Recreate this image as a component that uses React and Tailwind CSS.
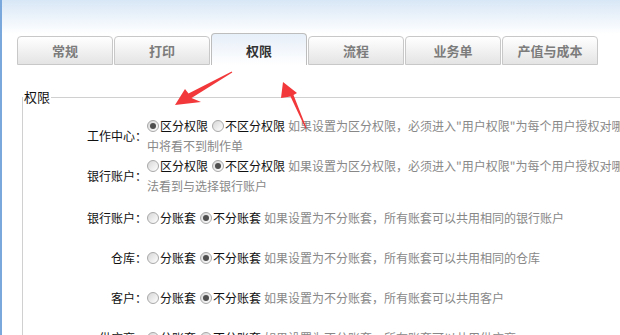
import React from "react";

const tabs = ["常规", "打印", "权限", "流程", "业务单", "产值与成本"];

function Radio({ checked, children }) {
  return (
    <span className="inline-flex items-center">
      <span className="relative mr-px inline-flex h-[12px] w-[12px] shrink-0 items-center justify-center rounded-full border border-[#a8a8a8] bg-gradient-to-br from-[#d6d6d6] to-white">
        {checked && <span className="h-[6px] w-[6px] rounded-full bg-[#4f4f4f]" />}
      </span>
      <span className="text-[#111]">{children}</span>
    </span>
  );
}

function Label({ children }) {
  return (
    <div className="w-[124px] shrink-0 text-right text-[12px] text-[#111]">{children}</div>
  );
}

// two options on one row, then the grey hint
function Options({ a, b, pick, hint }) {
  return (
    <div className="flex items-center whitespace-nowrap">
      <Radio checked={pick === 0}>{a}</Radio>
      <span className="ml-[4px]" />
      <Radio checked={pick === 1}>{b}</Radio>
      <span className="ml-[3px] text-[#888]">{hint}</span>
    </div>
  );
}

function TallRow({ label, pick, hint, rest }) {
  return (
    <div className="flex h-[40px] items-center">
      <Label>{label}</Label>
      <div className="text-[12px] leading-[20px]">
        <Options a="区分权限" b="不区分权限" pick={pick} hint={hint} />
        <div className="whitespace-nowrap text-[#888]">{rest}</div>
      </div>
    </div>
  );
}

function Row({ label, hint }) {
  return (
    <div className="flex h-[40px] items-center">
      <Label>{label}</Label>
      <div className="text-[12px] leading-[20px]">
        <Options a="分账套" b="不分账套" pick={1} hint={hint} />
      </div>
    </div>
  );
}

export default function App() {
  return (
    <div className="relative h-[335px] w-[620px] overflow-hidden border-l-2 border-[#7aa8dd] bg-[linear-gradient(to_bottom,#d8e7f6_0px,#ffffff_34px)] font-['Noto_Sans_CJK_SC',sans-serif]">
      {/* tabs */}
      <div className="ml-[15px] flex h-[65px] items-end gap-px">
        {tabs.map((t) =>
          t === "权限" ? (
            <div
              key={t}
              className="flex h-[32px] w-[96px] items-center justify-center rounded-t-[4px] border border-b-0 border-[#bdbdbd] bg-gradient-to-b from-[#e6eef8] to-white pt-[2px] text-[13px] font-bold text-[#333]"
            >
              {t}
            </div>
          ) : (
            <div
              key={t}
              className="flex h-[29px] w-[96px] items-center justify-center rounded-t-[4px] border border-[#c8c8c8] bg-gradient-to-b from-white to-[#e4e4e4] text-[13px] font-bold text-[#7c7c7c]"
            >
              {t}
            </div>
          )
        )}
      </div>

      <fieldset className="ml-[20px] mt-[22px] w-[700px] border border-[#d0d0d0]">
        <legend className="pl-px pr-px text-[13px] leading-[20px] text-[#111]">权限</legend>
        <div className="pt-[9px]">
          <TallRow
            label="工作中心："
            pick={0}
            hint="如果设置为区分权限，必须进入&quot;用户权限&quot;为每个用户授权对哪些工作中心有权限，否则用户在工作"
            rest="中将看不到制作单"
          />
          <TallRow
            label="银行账户："
            pick={1}
            hint="如果设置为区分权限，必须进入&quot;用户权限&quot;为每个用户授权对哪些银行账户有权限，否则用户无"
            rest="法看到与选择银行账户"
          />
          <div className="mt-[2px]">
            <Row label="银行账户：" hint="如果设置为不分账套，所有账套可以共用相同的银行账户" />
            <Row label="仓库：" hint="如果设置为不分账套，所有账套可以共用相同的仓库" />
            <Row label="客户：" hint="如果设置为不分账套，所有账套可以共用客户" />
            <Row label="供应商：" hint="如果设置为不分账套，所有账套可以共用供应商" />
          </div>
        </div>
      </fieldset>

      {/* red annotation arrows */}
      <svg className="pointer-events-none absolute left-0 top-0" width="620" height="335" viewBox="-2 0 620 335">
        <polygon
          points="228.3,72.5 227.7,71.5 184.5,93.5 181,89 171,105 197,102 187.5,98"
          fill="#f2383a"
        />
        <polygon
          points="302.5,128 301.5,128.5 286.5,96.5 277,98 279,82 293,93 289.5,95"
          fill="#f2383a"
        />
      </svg>
    </div>
  );
}
